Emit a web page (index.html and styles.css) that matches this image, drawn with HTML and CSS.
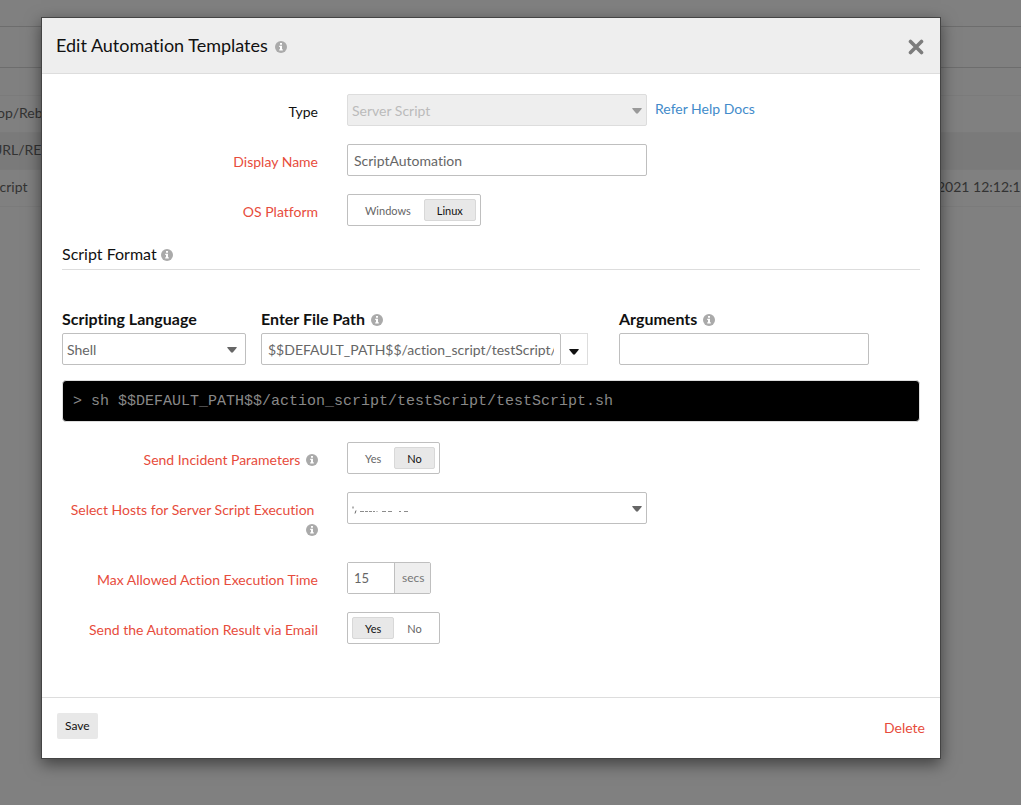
FILE: index.html
```html
<!DOCTYPE html>
<html lang="en">
<head>
<meta charset="utf-8">
<title>Edit Automation Templates</title>
<link rel="stylesheet" href="styles.css">
</head>
<body>
<svg class="defs" aria-hidden="true">
  <symbol id="info" viewBox="0 0 12 12">
    <circle cx="6" cy="6" r="6" fill="#aaa"/>
    <path d="M5 2h2v1.7H5zM4.2 4.8H7v3.4h.8v1.3H4.2V8.2H5V6h-.8z" fill="#fff"/>
  </symbol>
  <symbol id="caret" viewBox="0 0 10 6">
    <path d="M.5 0h9q.5.3 0 1L6 5.3q-1 .9-2 0L.5 1Q0 .3.5 0z" fill="currentColor"/>
  </symbol>
</svg>

<main class="page" aria-hidden="true">
  <div class="page-top"></div>
  <div class="page-bar"></div>
  <table class="list">
    <colgroup><col><col class="list-date"></colgroup>
    <tr class="list-head"><td></td><td></td></tr>
    <tr><td>top/Reb</td><td></td></tr>
    <tr class="list-alt"><td>URL/RES</td><td></td></tr>
    <tr><td>Script</td><td>2021 12:12:16</td></tr>
  </table>
</main>

<div class="overlay">
  <form class="modal" role="dialog" aria-labelledby="title">
    <header class="modal-head">
      <h1 id="title">Edit Automation Templates</h1>
      <svg class="info"><use href="#info"/></svg>
      <button class="close" type="button" aria-label="Close">
        <svg viewBox="0 0 16 16"><path d="M2.500 2.500 13.500 13.500M13.500 2.500 2.500 13.500" stroke="#7c7c7c" stroke-width="3.600" stroke-linecap="round"/></svg>
      </button>
    </header>

    <div class="modal-body">
      <div class="rows">
        <div class="row">
          <label class="plain" for="type">Type</label>
          <div class="control">
            <span class="select wide disabled">
              <select id="type" disabled><option>Server Script</option></select>
              <svg class="caret"><use href="#caret"/></svg>
            </span>
            <a class="help" href="#">Refer Help Docs</a>
          </div>
        </div>
        <div class="row">
          <label for="name">Display Name</label>
          <div class="control"><input class="field wide" id="name" type="text" value="ScriptAutomation"></div>
        </div>
        <div class="row">
          <span class="label" id="os">OS Platform</span>
          <div class="control">
            <div class="toggle" role="group" aria-labelledby="os">
              <button type="button" aria-pressed="false">Windows</button>
              <button type="button" aria-pressed="true">Linux</button>
            </div>
          </div>
        </div>
      </div>

      <h2 class="section">Script Format <svg class="info"><use href="#info"/></svg></h2>

      <div class="script">
        <div class="script-lang">
          <label for="lang">Scripting Language</label>
          <span class="select">
            <select id="lang"><option>Shell</option></select>
            <svg class="caret"><use href="#caret"/></svg>
          </span>
        </div>
        <div class="script-path">
          <label for="path">Enter File Path <svg class="info"><use href="#info"/></svg></label>
          <div class="combo">
            <input class="field wide" id="path" type="text" value="$$DEFAULT_PATH$$/action_script/testScript/testScript.sh">
            <button class="combo-button" type="button" aria-label="Choose path"><svg><use href="#caret"/></svg></button>
          </div>
        </div>
        <div class="script-args">
          <label for="args">Arguments <svg class="info"><use href="#info"/></svg></label>
          <input class="field" id="args" type="text">
        </div>
      </div>

      <pre class="terminal">&gt; sh $$DEFAULT_PATH$$/action_script/testScript/testScript.sh</pre>

      <div class="rows">
        <div class="row">
          <span class="label" id="params">Send Incident Parameters <svg class="info"><use href="#info"/></svg></span>
          <div class="control">
            <div class="toggle" role="group" aria-labelledby="params">
              <button type="button" aria-pressed="false">Yes</button>
              <button type="button" aria-pressed="true">No</button>
            </div>
          </div>
        </div>
        <div class="row">
          <label for="hosts">Select Hosts for Server Script Execution&nbsp; <svg class="info"><use href="#info"/></svg></label>
          <div class="control">
            <span class="select wide">
              <select id="hosts"><option></option></select>
              <svg class="masked" viewBox="0 0 60 12" fill="none" stroke="#666">
                <path d="M1 2.500v2M4 6.500l-1 3"/>
                <path d="M8 7.500h4M13 7.500h3M17 7.500h3M21 7.500h2M24.500 7.500h1M30 7.500h4M36 7.500h4M47 7.500h2M52 7.500h4" stroke-opacity=".75"/>
              </svg>
              <svg class="caret"><use href="#caret"/></svg>
            </span>
          </div>
        </div>
        <div class="row">
          <label for="time">Max Allowed Action Execution Time</label>
          <div class="control">
            <div class="unit"><input id="time" type="text" value="15"><span>secs</span></div>
          </div>
        </div>
        <div class="row">
          <span class="label" id="email">Send the Automation Result via Email</span>
          <div class="control">
            <div class="toggle" role="group" aria-labelledby="email">
              <button type="button" aria-pressed="true">Yes</button>
              <button type="button" aria-pressed="false">No</button>
            </div>
          </div>
        </div>
      </div>
    </div>

    <footer class="modal-foot">
      <button class="save" type="button">Save</button>
      <a class="delete" href="#">Delete</a>
    </footer>
  </form>
</div>
</body>
</html>
```

FILE: styles.css
```css
* { box-sizing: border-box; }

body {
  margin: 0;
  min-height: 100vh;
  overflow: hidden;
  background: #808080;
  color: #111;
  font: 14px/20px Lato, "Liberation Sans", sans-serif;
  font-variant-ligatures: none;
}

input, select, button { margin: 0; font: inherit; font-variant-ligatures: none; color: #666; }
a { text-decoration: none; }
.defs { position: absolute; width: 0; height: 0; }

/* Dimmed page behind the dialog */
.page-top { height: 27px; border-bottom: 1px solid #6d6d6d; }
.page-bar { height: 41px; border-bottom: 1px solid #6d6d6d; }
.list { width: 100%; table-layout: fixed; border-collapse: collapse; color: #333; }
.list td { height: 37px; padding: 0 0 1px; border-bottom: 1px solid #7b7b7b; white-space: nowrap; }
.list td:first-child { text-indent: -8px; }
.list .list-head td { height: 27px; }
.list-alt { background: #7a7a7a; }
.list-date { width: 84px; }

/* Dialog */
.overlay { position: absolute; inset: 0; padding: 17px 80px 46px 41px; }
.modal {
  background: #fff;
  border: 1px solid #444;
  box-shadow: 0 5px 15px rgba(0, 0, 0, .5);
}
.modal-head {
  display: flex;
  align-items: center;
  gap: 7px;
  height: 56px;
  padding: 0 16px 0 14px;
  background: #eee;
  border-bottom: 1px solid #ddd;
}
.modal-head h1 { margin: 0; padding-bottom: 2px; font-size: 18px; font-weight: 400; }
.info { width: 12px; height: 12px; vertical-align: -1px; }
.modal-head .info { margin-top: 2px; }
.close { margin-left: auto; padding: 2px 0 0; border: 0; background: none; }
.close svg { display: block; width: 16px; height: 16px; }

.modal-body { padding: 20px 20px 53px; }
.rows { display: flex; flex-direction: column; gap: 18px; }
.row {
  display: grid;
  grid-template-columns: 256px 1fr;
  column-gap: 29px;
  align-items: start;
}
.row label, .row .label { padding: 8px 0 4px; text-align: right; color: #e74c3c; }
.row .plain { color: #111; }
.row .label .info { margin-left: 2px; }
.control { display: flex; gap: 8px; }
.help { padding-top: 5px; color: #428bca; }

.field {
  width: 250px;
  height: 32px;
  padding: 0 6px;
  border: 1px solid #bfbfbf;
  border-radius: 2px;
  background: #fff;
}
.wide { width: 300px; }

.select { position: relative; display: block; height: 32px; }
.select select {
  display: block;
  width: 100%;
  height: 32px;
  padding: 2px 4px 0;
  border: 1px solid #bfbfbf;
  border-radius: 2px;
  background: #fff;
  appearance: none;
}
.select .caret {
  position: absolute;
  top: 14px;
  right: 5px;
  width: 10px;
  height: 6px;
  color: #666;
  pointer-events: none;
}
.select.disabled select { background: #eee; border-color: #ddd; color: #bbb; opacity: 1; }
.select.disabled .caret { color: #999; }
.masked { position: absolute; top: 12px; left: 5px; width: 60px; height: 12px; pointer-events: none; }

.toggle {
  display: flex;
  height: 32px;
  padding: 4px;
  border: 1px solid #bfbfbf;
  border-radius: 2px;
}
.toggle button {
  height: 22px;
  padding: 1px 12px 0;
  border: 1px solid transparent;
  border-radius: 2px;
  background: none;
  font-size: 11px;
}
.toggle [aria-pressed="true"] { background: #e8e8e8; border-color: #d8d8d8; color: #111; }

.section {
  margin: 16px 0 37px;
  padding-bottom: 4px;
  border-bottom: 1px solid #ddd;
  font-size: 16px;
  font-weight: 400;
  line-height: 23px;
}

.script { display: flex; }
.script label { display: block; padding-bottom: 2px; font-size: 16px; font-weight: 700; line-height: 24px; }
.script label .info { margin-left: 2px; }
.script-lang { width: 184px; margin-right: 15px; }
.script-lang .caret { right: 9px; }
.script-path { margin-right: 31px; }
.combo { display: flex; }
.combo-button {
  display: flex;
  align-items: center;
  justify-content: center;
  width: 27px;
  padding: 6px 0 0;
  border: 1px solid #ddd;
  border-left: 0;
  background: #fff;
  color: #111;
}
.combo-button svg { width: 10px; height: 6px; }

.terminal {
  margin: 15px 0 20px;
  padding: 11px 10px 9px;
  border: 1px solid #ddd;
  border-radius: 4px;
  background: #000;
  color: #888;
  font: 15px/20px "Liberation Mono", monospace;
}

.unit { display: flex; height: 32px; border: 1px solid #bfbfbf; border-radius: 2px; font-size: 12px; }
.unit input { width: 46px; padding: 0 6px; border: 0; font-size: 13px; }
.unit span { padding: 5px 6px 0 7px; border-left: 1px solid #bfbfbf; background: #eee; color: #777; }

.modal-foot {
  display: flex;
  justify-content: space-between;
  align-items: flex-start;
  height: 61px;
  padding: 15px;
  border-top: 1px solid #ddd;
}
.save { height: 26px; padding: 0 8px; border: 0; border-radius: 2px; background: #e8e8e8; color: #111; font-size: 12px; }
.delete { padding-top: 5px; color: #e74c3c; }
```
